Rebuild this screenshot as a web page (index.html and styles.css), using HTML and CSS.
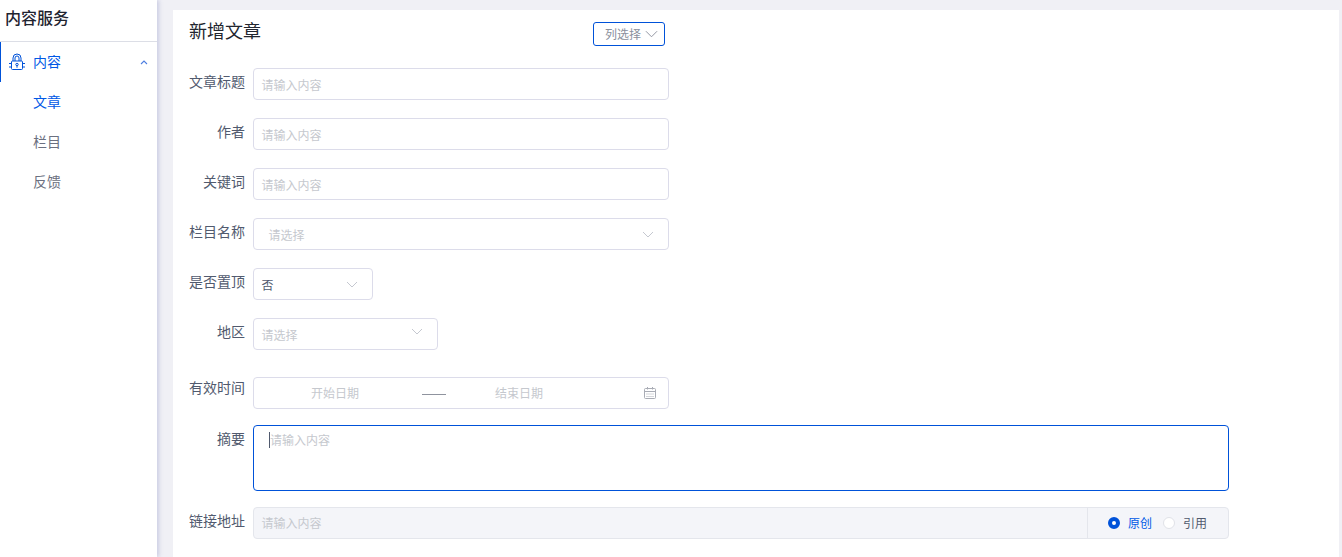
FILE: index.html
```html
<!DOCTYPE html>
<html lang="zh-CN">
<head>
<meta charset="utf-8">
<title>新增文章</title>
<link rel="stylesheet" href="styles.css">
</head>
<body>
<div class="app">
  <aside class="sidebar">
    <div class="brand">内容服务</div>
    <nav class="menu">
      <div class="menu-head">
        <svg class="lock" viewBox="0 0 18 18" width="18" height="18" fill="none" stroke="#0052d9" stroke-width="1">
          <path d="M5 8V5a4 4 0 0 1 8 0v3"/>
          <path d="M7 8V5a2 2 0 0 1 4 0v3"/>
          <rect x="3.500" y="8" width="11" height="8.500" rx="1"/>
          <path d="M1 10.500h2.500M1 14h2.500M14.500 10.500H17M14.500 14H17"/>
          <circle cx="9" cy="11.500" r="1.200"/>
          <path d="M9 12.700v2"/>
        </svg>
        <span class="menu-title">内容</span>
        <svg class="caret" viewBox="0 0 8 5" width="8" height="5" fill="none" stroke="#4d7ee0" stroke-width="1.100"><path d="M1 4l3-3 3 3"/></svg>
      </div>
      <a class="menu-item active">文章</a>
      <a class="menu-item">栏目</a>
      <a class="menu-item">反馈</a>
    </nav>
  </aside>
  <main class="main">
    <section class="card">
      <header class="card-head">
        <h1 class="card-title">新增文章</h1>
        <button class="col-btn"><span class="col-text">列选择</span>
          <svg viewBox="0 0 14 8" width="13" height="8" fill="none" stroke="#8a8f9c" stroke-width="1"><path d="M1 1l6 6 6-6"/></svg>
        </button>
      </header>
      <form class="form">
        <div class="row">
          <label class="label">文章标题</label>
          <div class="control w-full"><span class="ph">请输入内容</span></div>
        </div>
        <div class="row">
          <label class="label">作者</label>
          <div class="control w-full"><span class="ph">请输入内容</span></div>
        </div>
        <div class="row">
          <label class="label">关键词</label>
          <div class="control w-full"><span class="ph">请输入内容</span></div>
        </div>
        <div class="row">
          <label class="label">栏目名称</label>
          <div class="control w-full select indent"><span class="ph">请选择</span>
            <svg class="chev" viewBox="0 0 12 7" width="12" height="7" fill="none" stroke="#c5c8d0" stroke-width="1"><path d="M1 1l5 5 5-5"/></svg>
          </div>
        </div>
        <div class="row">
          <label class="label">是否置顶</label>
          <div class="control w-small select"><span class="val">否</span>
            <svg class="chev" viewBox="0 0 12 7" width="12" height="7" fill="none" stroke="#c5c8d0" stroke-width="1"><path d="M1 1l5 5 5-5"/></svg>
          </div>
        </div>
        <div class="row row-wide">
          <label class="label">地区</label>
          <div class="control w-mid select"><span class="ph">请选择</span>
            <svg class="chev chev-up" viewBox="0 0 12 7" width="12" height="7" fill="none" stroke="#c5c8d0" stroke-width="1"><path d="M1 1l5 5 5-5"/></svg>
          </div>
        </div>
        <div class="row row-tight">
          <label class="label label-low">有效时间</label>
          <div class="control w-full date">
            <span class="date-ph">开始日期</span>
            <span class="date-sep"></span>
            <span class="date-ph">结束日期</span>
            <svg class="cal" viewBox="0 0 14 14" width="14" height="14" fill="none" stroke="#a9acb5" stroke-width="1">
              <rect x="1.500" y="2.500" width="11" height="10" rx="1"/>
              <path d="M1.500 5.500h11M4.500 1v2.500M9.500 1v2.500"/>
              <path d="M3.500 8h7M3.500 10.500h7" stroke-dasharray="1 1"/>
            </svg>
          </div>
        </div>
        <div class="row row-tight">
          <label class="label">摘要</label>
          <div class="control w-wide area"><i class="cursor"></i><span class="ph">请输入内容</span></div>
        </div>
        <div class="row">
          <label class="label">链接地址</label>
          <div class="control w-wide addon">
            <div class="addon-input"><span class="ph">请输入内容</span></div>
            <div class="addon-radios">
              <span class="radio on"></span><span class="radio-text on-text">原创</span>
              <span class="radio"></span><span class="radio-text">引用</span>
            </div>
          </div>
        </div>
      </form>
    </section>
  </main>
</div>
</body>
</html>
```
FILE: styles.css
```css
* { box-sizing: border-box; }
html, body { margin: 0; height: 557px; overflow: hidden; }
body {
  background: #f0f0f5;
  font-family: "Noto Sans CJK SC", "Noto Sans", sans-serif;
  color: #515a6e;
}
.app { display: flex; height: 557px; }

.sidebar {
  width: 157px;
  flex: none;
  background: #fff;
  box-shadow: 2px 0 4px rgba(120, 125, 190, .3);
}
.brand {
  height: 42px;
  padding: 6px 0 0 5px;
  font-size: 16px;
  line-height: 22px;
  font-weight: 500;
  color: #1f2430;
  border-bottom: 1px solid #dcdee6;
}
.menu-head {
  display: flex;
  align-items: center;
  height: 40px;
  padding-left: 7px;
  border-left: 1px solid #0052d9;
}
.lock { flex: none; }
.menu-title {
  margin-left: 7px;
  margin-top: -2px;
  font-size: 14px;
  line-height: 20px;
  color: #0058e6;
}
.caret { margin-left: auto; margin-right: 9px; }
.menu-item {
  display: block;
  height: 40px;
  padding-left: 33px;
  font-size: 14px;
  line-height: 38px;
  color: #6b7080;
}
.menu-item.active { color: #0058e6; }

.main { flex: 1; min-width: 0; padding: 10px 3px 0 16px; }
.card { background: #fff; height: 547px; padding: 0 0 0 16px; }
.card-head {
  display: flex;
  width: 476px;
  height: 58px;
  justify-content: space-between;
  align-items: flex-start;
}
.card-title {
  margin: 7px 0 0;
  font-size: 18px;
  line-height: 26px;
  font-weight: 400;
  color: #22262f;
}
.col-btn {
  display: flex;
  align-items: center;
  gap: 4px;
  width: 72px;
  height: 24px;
  margin-top: 12px;
  padding: 0 0 0 11px;
  font: inherit;
  font-size: 12px;
  color: #8a8f9c;
  background: #fff;
  border: 1px solid #0052d9;
  border-radius: 3px;
}
.col-text { margin-top: -2px; }

.row { display: flex; align-items: flex-start; margin-bottom: 18px; }
.row-wide { margin-bottom: 27px; }
.row-tight { margin-bottom: 16px; }
.label {
  width: 56px;
  flex: none;
  margin-right: 8px;
  text-align: right;
  font-size: 14px;
  line-height: 20px;
  padding-top: 3px;
  color: #515a6e;
  white-space: nowrap;
}
.label-low { padding-top: 0; }
.control {
  display: flex;
  align-items: center;
  height: 32px;
  padding: 0 7px 0 8px;
  background: #fff;
  border: 1px solid #dcdcea;
  border-radius: 4px;
  font-size: 12px;
}
.w-full { width: 416px; }
.w-small { width: 120px; }
.w-mid { width: 185px; }
.w-wide { width: 976px; }
.ph { color: #c5c8ce; line-height: 18px; padding-top: 1px; margin-left: -.5px; }
.val { color: #515a6e; margin-left: -.5px; }
.select { justify-content: space-between; padding-right: 14px; }
.indent { padding-left: 15px; }
.chev { flex: none; }
.chev-up { margin-top: -6px; }

.date { padding: 0; }
.date-ph { color: #c5c8ce; width: 48px; margin-top: -1px; }
.date-ph:first-child { margin-left: 57px; }
.date-sep {
  width: 24px;
  height: 1px;
  margin: 0 49px 0 63px;
  background: #8f939e;
  position: relative;
  top: 1px;
}
.cal { margin-left: auto; margin-right: 11px; }

.area {
  height: 66px;
  align-items: flex-start;
  padding: 5px 15px;
  border-color: #0052d9;
  line-height: 18px;
}
.area .ph { padding-top: 0; margin-left: 0; }
.cursor {
  width: 1px;
  height: 16px;
  margin-top: 1px;
  background: #515a6e;
  flex: none;
}
.addon {
  padding: 0;
  background: #f4f5f9;
  border-color: #e4e6ec;
}
.addon-input {
  display: flex;
  align-items: center;
  flex: 1;
  height: 100%;
  padding-left: 8px;
}
.addon-input .ph { padding-top: 0; }
.addon-radios {
  display: flex;
  align-items: center;
  width: 141px;
  height: 100%;
  padding-left: 20px;
  border-left: 1px solid #e4e6ec;
}
.radio {
  width: 12px;
  height: 12px;
  flex: none;
  background: #fff;
  border: 1px solid #e0e2e8;
  border-radius: 50%;
}
.radio.on { border: 4px solid #0052d9; }
.radio-text { margin: -2px 11px 0 8px; color: #515a6e; }
.on-text { color: #0058e6; }
```
